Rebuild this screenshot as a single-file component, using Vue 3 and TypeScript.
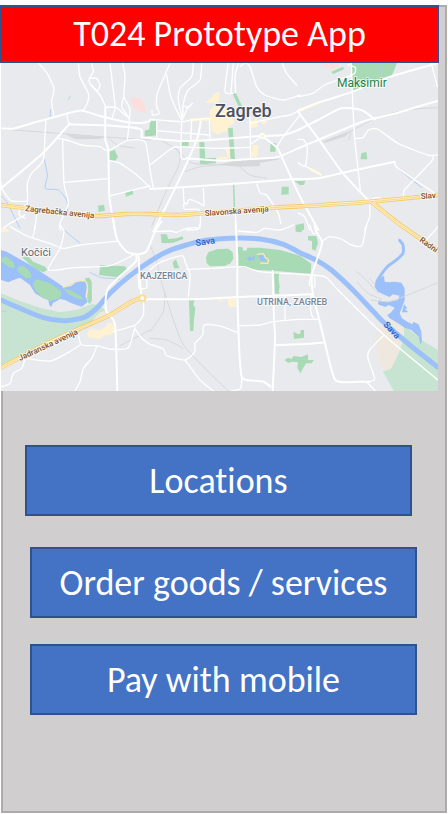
<script setup lang="ts">
type Tile = { x: number; y: number; lines: string[] }

const actions: string[] = ['Locations', 'Order goods / services', 'Pay with mobile']

// Turns "x,y x,y ..." into a softly curved path.
function curve(points: string): string {
  const p = points.split(' ').map((s) => s.split(',').map(Number))
  let d = `M${p[0][0]} ${p[0][1]}`
  for (let i = 0; i < p.length - 1; i++) {
    const a = p[Math.max(i - 1, 0)]
    const b = p[i]
    const c = p[i + 1]
    const e = p[Math.min(i + 2, p.length - 1)]
    const k = 9
    d += `C${b[0] + (c[0] - a[0]) / k} ${b[1] + (c[1] - a[1]) / k} ${c[0] - (e[0] - b[0]) / k} ${c[1] - (e[1] - b[1]) / k} ${c[0]} ${c[1]}`
  }
  return d
}

const meadow: Tile[] = [
  { x: 0, y: 495, lines: ['3,205 60,228 120,248 180,262 230,255 275,238 300,240 320,262 280,300 3,428'] },
  { x: 894, y: 495, lines: ['318,300 370,345 420,375 420,498 288,498 255,440 280,430 300,390 318,340'] },
]

const sand: Tile[] = [
  { x: 0, y: 495, lines: ['282,280 300,262 318,258 322,270 275,292'] },
  { x: 894, y: 495, lines: ['255,290 290,275 318,310 315,350 298,385 280,430 255,437 240,400 232,340'] },
]

const pink: Tile[] = [
  { x: 0, y: 0, lines: ['390,116 402,112 412,116 422,110 432,128 437,155 430,160 405,148 396,135'] },
  { x: 894, y: 0, lines: ['65,9 125,9 118,22 95,30'] },
]

const yellow: Tile[] = [
  { x: 450, y: 0, lines: [
    '165,128 185,112 198,98 209,97 207,125 195,130',
    '180,150 195,135 250,150 252,190 235,200 230,215 218,215 205,224 187,215 180,180',
    '300,185 320,175 325,200 300,205',
    '333,185 350,180 350,190 335,193',
    '308,255 326,255 322,290 305,292',
    '226,268 240,265 240,295 200,300 205,290 232,290',
    '120,175 178,172 178,182 122,184',
  ] },
  { x: 894, y: 0, lines: ['35,322 70,338 65,345 35,332', '0,148 60,124 68,130 5,156'] },
  { x: 0, y: 495, lines: [
    '262,325 270,313 300,315 320,303 322,293 340,295 345,320 330,330 315,330 300,342 265,338',
    '3,10 20,10 28,20 3,22',
  ] },
  { x: 450, y: 495, lines: ['233,222 257,220 258,247 237,246', '205,222 217,222 217,228 205,228'] },
]

const parks: Tile[] = [
  { x: 0, y: 0, lines: [
    '450,183 470,183 470,226 434,230 434,212 448,208',
    '327,275 345,269 348,280 354,290 346,302 325,300',
    '376,400 398,390 400,402 378,410',
    '294,437 312,434 315,452 296,456',
  ] },
  { x: 450, y: 0, lines: [
    '247,100 258,100 276,138 276,152 262,132',
    '234,205 248,204 255,297 242,297',
    '94,242 117,243 115,260 93,258',
    '148,246 163,246 166,295 198,293 198,310 150,313',
    '362,248 378,250 376,275 360,275',
    '395,380 416,380 416,403 394,404',
    '437,495 462,490 462,510 437,510',
    '434,364 466,362 462,374 450,376',
    '249,370 253,370 256,455 251,455',
  ] },
  { x: 894, y: 0, lines: [
    '160,9 297,9 285,38 278,52 240,62 200,85 165,90',
    '100,35 135,20 138,28 105,42',
    '190,280 205,276 208,298 188,298',
  ] },
  { x: 0, y: 495, lines: [
    '65,95 85,95 100,110 135,125 142,135 130,142 110,135 85,115',
    '300,120 375,124 383,135 350,157 298,150',
  ] },
  { x: 450, y: 495, lines: [
    '168,98 175,82 200,73 235,71 248,82 250,100 242,115 225,122 180,124 170,115',
    '262,65 277,66 280,78 290,76 292,68 330,68 390,75 450,92 484,116 482,146 450,144 380,138 320,135 270,125 262,122',
    '32,28 50,28 55,42 80,40 98,34 100,42 70,53 35,55',
    '68,112 78,103 88,130 72,130',
    '372,140 388,142 386,160 389,185 386,200 390,205 375,207',
    '117,226 133,226 130,240 136,248 132,285 130,318 120,318',
    '438,0 456,0 456,22 437,20',
    '403,405 415,398 425,402 430,393 455,396 474,388 474,405 492,405 484,415 469,415 459,430 452,445 442,430 444,412 425,410 415,414',
    '430,320 445,328 452,325 452,315 462,315 462,338 432,342',
  ] },
  { x: 894, y: 495, lines: ['30,33 55,33 60,55 52,78 42,72 42,48 30,46'] },
]

const water: Tile[] = [
  { x: 0, y: 495, lines: ['3,75 20,80 90,120 160,165 190,185 210,180 228,168 255,168 262,185 258,215 262,232 245,245 215,235 195,225 180,222 158,235 154,246 148,240 145,225 130,220 105,205 90,180 60,158 40,165 25,172 3,165'] },
  { x: 894, y: 495, lines: [
    '232,170 245,160 258,152 260,170 275,172 290,170 310,173 320,190 320,225 315,240 305,265 312,280 330,292 345,298 345,290 362,298 370,320 372,350 367,358 362,335 340,315 320,308 300,295 275,280 268,270 280,262 290,248 272,240 262,246 240,238 242,226 270,232 300,225 304,212 285,208 275,216 260,210 240,200 230,185',
    '318,238 328,250 320,252 332,262 312,262',
  ] },
]

const islets: Tile[] = [
  { x: 0, y: 495, lines: [
    '3,98 20,95 40,112 46,128 30,128 3,108',
    '55,125 70,122 90,140 95,158 80,160 65,150 52,135',
    '98,175 110,162 150,175 185,200 180,220 150,228 125,215 105,195',
    '255,160 268,158 275,170 276,225 270,237 262,230 262,210 265,190 258,175',
    '190,190 215,197 245,215 250,225 230,220 205,208',
  ] },
]

const ponds: Tile[] = [
  { x: 450, y: 495, lines: ['290,100 300,94 305,98 315,92 312,104 298,108', '325,92 343,90 348,108 332,108'] },
]

const beaches: Tile[] = [
  { x: 450, y: 495, lines: ['322,88 340,86 346,98 355,103 353,115 332,114'] },
  { x: 0, y: 495, lines: ['190,186 212,181 228,170 255,168 262,185 258,215'] },
]

const streams: Tile[] = [
  { x: 0, y: 0, lines: ['152,148 150,175', '132,295 142,345 136,385 175,390 200,420 203,455', '0,405 20,425 40,465 60,505', '212,108 205,118'] },
  { x: 894, y: 0, lines: ['305,330 370,382', '248,18 248,34', '246,42 243,52'] },
  { x: 0, y: 495, lines: ['192,15 240,55', '270,142 305,158 360,162', '3,258 18,259'] },
]

const rails: Tile[] = [
  { x: 0, y: 0, lines: ['3,207 200,222 300,230 450,240', '200,222 228,236 300,234', '325,232 350,255 402,264'] },
  { x: 450, y: 0, lines: ['0,239 30,240 80,268 100,290 130,310 200,315 250,310 350,302 444,262', '75,262 90,285 85,320 45,400 5,500', '265,316 300,345 350,355', '105,335 150,320 200,315'] },
  { x: 894, y: 0, lines: ['75,246 160,212 230,176 300,155 360,146 420,143', '160,212 152,240'] },
  { x: 0, y: 495, lines: ['360,362 450,315'] },
  { x: 450, y: 495, lines: ['0,60 20,110 40,190 95,350 165,430 235,498', '45,200 40,260 0,320', '0,340 50,345 100,370'] },
  { x: 894, y: 495, lines: ['220,225 270,230 330,210 420,173', '178,172 210,205 250,222', '175,140 200,160 240,205', '215,160 232,180'] },
]

const yards: Tile[] = [
  { x: 450, y: 0, lines: ['200,315 250,303 370,290 390,298 330,308 330,318 270,320'] },
  { x: 0, y: 0, lines: ['200,222 320,230 300,236 228,236'] },
  { x: 894, y: 0, lines: ['75,244 160,212 140,230 80,248'] },
]

const minor: Tile[] = [
  { x: 0, y: 0, lines: [
    '115,9 140,38 162,85 155,125 162,168',
    '235,9 240,50 265,100 262,130 248,152',
    '275,9 280,35 268,55 272,75 300,105 318,142',
    '272,55 290,55 300,75 292,92 275,75',
    '330,9 336,60 345,140 335,178',
    '368,9 375,50 372,110 390,150 382,242',
    '370,112 365,140 378,160 386,175',
    '315,142 348,142 375,165 388,172',
    '200,165 207,193',
    '138,178 135,220 130,300 95,340 82,370 82,430 60,445 58,465 75,475',
    '188,240 192,370 205,430 180,490 182,510',
    '192,367 325,356',
    '328,408 380,395 450,378',
    '325,302 360,310 410,345 450,382',
    '175,235 200,240 245,255 300,260 325,272 382,242 435,245 450,330 460,385',
    '3,365 5,385 30,420 45,424 82,424',
    '112,445 105,505',
    '75,465 30,490 10,505',
  ] },
  { x: 450, y: 0, lines: [
    '0,178 60,183 100,185 125,180 178,175',
    '20,212 180,225', '20,180 20,235', '95,185 93,290 108,297', '125,180 122,240', '178,175 180,240',
    '93,260 130,262 200,265 300,262',
    '0,315 70,262 93,265',
    '300,170 302,297',
    '337,228 303,252',
    '380,262 400,230 450,165',
    '300,190 380,172 420,165 450,150',
    '130,9 125,50 90,85 85,120 98,180',
    '155,9 150,60 115,90 100,130 98,175',
    '100,172 112,146 128,130 112,142 104,138',
    '60,9 45,45 22,100 20,140 28,160 8,165 6,152',
    '50,45 60,100 75,140 95,180',
    '235,9 225,95 250,100', '250,9 243,98', '265,9 255,50 257,98',
    '270,20 285,9 300,20 320,80 345,105 400,120 450,105',
    '397,9 410,40 440,75',
    '100,385 102,425 112,432 118,418 150,430 160,438',
    '160,385 162,435',
    '102,430 104,448 148,450 148,505 110,510',
    '256,455 258,510',
    '320,372 332,400 350,405 385,460 392,490',
  ] },
  { x: 894, y: 0, lines: [
    '0,110 45,100 80,75 150,50 170,40 172,22 150,14',
    '160,9 163,100 170,235 187,390',
    '170,235 195,233 212,210 240,208 300,250 390,285 420,285',
    '405,290 400,305 320,390 320,422',
    '290,305 300,325 408,398',
    '0,238 18,240 28,265 22,318 0,308', '22,318 70,345',
    '400,9 418,80',
    '215,430 215,470 200,510',
    '190,425 240,412 250,420',
    '0,460 20,470 35,510',
  ] },
  { x: 0, y: 495, lines: [
    '30,5 95,38 105,0',
    '95,38 150,55 190,70 240,60 355,48',
    '180,0 192,20 180,70 145,135 220,128 330,122 400,90',
    '415,150 418,190 440,188 440,165',
    '430,230 430,270 405,300 340,320',
    '235,330 245,360 290,362 330,372 385,368 405,305',
    '75,400 150,408 200,385 240,360',
    '75,402 65,430 40,445 30,475 3,485',
    '290,365 275,400 250,430 240,470 225,498',
    '405,312 425,340 450,358',
  ] },
  { x: 450, y: 495, lines: [
    '15,20 60,18 80,22 110,10 148,8 148,0',
    '0,135 30,112 95,92 105,110 120,150 115,215',
    '110,133 190,130 280,125 330,140 450,148',
    '265,18 320,22 345,10 390,15 430,0',
    '265,302 330,300 370,290 450,283',
    '405,215 405,285',
    '0,358 40,372 50,392 105,405 135,380 135,355 158,330 162,300 205,302 265,323',
    '105,405 150,465 190,498',
    '275,455 272,490 245,498',
  ] },
  { x: 894, y: 495, lines: [
    '75,47 95,35 130,42 160,60 192,62 205,0',
    '0,148 80,155 120,195 258,330 420,465',
    '215,470 230,460 210,400 215,375 258,330',
    '35,0 45,25 58,25', '0,283 65,283', '38,155 34,180 50,185 50,155', '40,210 38,260 48,283',
    '205,470 232,498', '420,5 385,45',
  ] },
]

const major: Tile[] = [
  { x: 0, y: 0, lines: [
    '3,205 40,206 100,188 162,172 210,158 248,152 300,168 386,187 430,188 450,183',
    '207,193 315,196 420,207 425,232 450,233',
    '3,385 130,278 207,193',
    '316,142 316,240 325,272 328,410 345,510',
  ] },
  { x: 450, y: 0, lines: [
    '0,235 90,243 180,240 300,230 400,225 450,208',
    '152,185 140,240 75,385 10,515',
    '108,295 220,302 300,297 380,292 450,262',
    '0,387 75,383 240,372 370,362 450,356',
    '337,228 380,262 395,290 450,410 505,510',
  ] },
  { x: 894, y: 0, lines: [
    '0,152 70,125 165,95 270,52 420,9',
    '0,210 60,180 130,145 190,150 230,178',
    '0,265 65,238 200,183 300,158 420,122',
    '0,155 60,235 135,340 215,425',
    '0,358 60,355 135,338 290,305',
  ] },
  { x: 0, y: 495, lines: [
    '340,-15 345,20 355,50 380,80 410,88 440,78 465,20 484,-10',
    '408,88 405,112 325,190 318,255 345,300 352,498',
    '415,88 425,215 450,222',
  ] },
  { x: 450, y: 495, lines: [
    '257,-10 262,100 262,215 268,380 275,455 290,465 340,470 362,485',
    '0,223 150,222 262,216 490,208',
    '368,138 372,280 375,340 368,498',
    '378,360 450,358 525,352',
  ] },
  { x: 894, y: 495, lines: ['50,0 55,20 72,50 65,80 42,150 45,210 60,270 80,350 112,465 180,470 215,470'] },
]

const highways: string[] = [
  '3,435 60,442 170,458 290,468 380,462 450,462 530,465 610,460 820,443 954,436 1114,425 1314,405',
  '1114,425 1202,495 1314,572',
  '3,923 130,856 240,805 320,770 395,725 425,713',
]

const river = '3,720 60,745 130,773 190,782 250,773 290,745 330,700 380,655 450,604 510,571 600,544 690,535 780,537 850,553 900,578 950,601 994,630 1064,695 1144,780 1194,825 1244,867 1314,922'
const inlet = '1199,541 1209,555 1209,580 1189,600 1164,618 1146,640 1132,662'
</script>

<template>
  <div class="page">
    <main class="frame">
      <header class="banner"><h1>T024 Prototype App</h1></header>

      <svg class="map" viewBox="0 0 437 328" role="img" aria-label="Zagreb">
        <g transform="translate(-1 -3) scale(0.33333)">
          <g class="meadow"><g v-for="t in meadow" :key="t.x" :transform="`translate(${t.x} ${t.y})`"><polygon v-for="l in t.lines" :key="l" :points="l" /></g></g>
          <g class="sand"><g v-for="t in sand" :key="t.x" :transform="`translate(${t.x} ${t.y})`"><polygon v-for="l in t.lines" :key="l" :points="l" /></g></g>
          <g class="pink"><g v-for="t in pink" :key="t.x" :transform="`translate(${t.x} ${t.y})`"><polygon v-for="l in t.lines" :key="l" :points="l" /></g></g>
          <g class="yellow"><g v-for="(t, i) in yellow" :key="i" :transform="`translate(${t.x} ${t.y})`"><polygon v-for="l in t.lines" :key="l" :points="l" /></g></g>
          <g class="park"><g v-for="(t, i) in parks" :key="i" :transform="`translate(${t.x} ${t.y})`"><polygon v-for="l in t.lines" :key="l" :points="l" /></g></g>
          <g class="water"><g v-for="t in water" :key="t.x" :transform="`translate(${t.x} ${t.y})`"><polygon v-for="l in t.lines" :key="l" :points="l" /></g></g>
          <g class="park"><g v-for="t in islets" :key="t.x" :transform="`translate(${t.x} ${t.y})`"><polygon v-for="l in t.lines" :key="l" :points="l" /></g></g>
          <g class="water"><g v-for="t in ponds" :key="t.x" :transform="`translate(${t.x} ${t.y})`"><polygon v-for="l in t.lines" :key="l" :points="l" /></g></g>
          <g class="line beach"><g v-for="t in beaches" :key="t.x" :transform="`translate(${t.x} ${t.y})`"><path v-for="l in t.lines" :key="l" :d="curve(l)" /></g></g>
          <g class="yard"><g v-for="t in yards" :key="t.x" :transform="`translate(${t.x} ${t.y})`"><polygon v-for="l in t.lines" :key="l" :points="l" /></g></g>
          <g class="line stream"><g v-for="(t, i) in streams" :key="i" :transform="`translate(${t.x} ${t.y})`"><path v-for="l in t.lines" :key="l" :d="curve(l)" /></g></g>
          <g class="line rail"><g v-for="(t, i) in rails" :key="i" :transform="`translate(${t.x} ${t.y})`"><path v-for="l in t.lines" :key="l" :d="curve(l)" /></g></g>
          <path class="line inlet" :d="curve(inlet)" />
          <path class="line river" :d="curve(river)" />
          <g class="line minor"><g v-for="(t, i) in minor" :key="i" :transform="`translate(${t.x} ${t.y})`"><path v-for="l in t.lines" :key="l" :d="curve(l)" /></g></g>
          <g class="line major"><g v-for="(t, i) in major" :key="i" :transform="`translate(${t.x} ${t.y})`"><path v-for="l in t.lines" :key="l" :d="curve(l)" /></g></g>
          <circle class="ring" cx="787" cy="228" r="7" />
          <g class="line casing"><path v-for="h in highways" :key="h" :d="curve(h)" /></g>
          <g class="line lane"><path v-for="h in highways" :key="h" :d="curve(h)" /></g>
          <g class="line divider"><path v-for="h in highways" :key="h" :d="curve(h)" /></g>
          <circle class="roundabout" cx="427" cy="715" r="9" />
        </g>

        <text class="city" x="214" y="54">Zagreb</text>
        <text class="park-name" x="336" y="24">Maksimir</text>
        <text class="town" x="20" y="193">Kočići</text>
        <text class="district" x="139" y="216">KAJZERICA</text>
        <text class="district" x="256" y="242">UTRINA, ZAGREB</text>
        <text class="road" transform="translate(24 148) rotate(6)">Zagrebačka avenija</text>
        <text class="road" transform="translate(204 153) rotate(-4)">Slavonska avenija</text>
        <text class="road" transform="translate(420 136) rotate(-4)">Slav</text>
        <text class="road" transform="translate(418 178) rotate(36)">Radni</text>
        <text class="road" transform="translate(19 298) rotate(-25)">Jadranska avenija</text>
        <text class="river-name" transform="translate(195 183) rotate(-8)">Sava</text>
        <text class="river-name" transform="translate(382 262) rotate(47)">Sava</text>
      </svg>

      <nav class="actions">
        <button v-for="label in actions" :key="label" type="button" class="action">{{ label }}</button>
      </nav>
    </main>
  </div>
</template>

<style>
body {
  background: #fff;
}
</style>

<style scoped>
.page {
  box-sizing: border-box;
  min-height: 100vh;
  padding: 5px 1px 1px;
  display: flex;
  font-family: Carlito, Lato, sans-serif;
  font-variant-ligatures: none;
}
.frame {
  box-sizing: border-box;
  flex: 1;
  min-width: 0;
  display: flex;
  flex-direction: column;
  background: #d0cece;
  border: 2px solid #aeabab;
}
.banner {
  box-sizing: border-box;
  margin: -2px 6px 0 -3px;
  height: 58px;
  display: flex;
  align-items: center;
  justify-content: center;
  background: #f00;
  border: 2px solid #2f528f;
  color: #fff;
}
h1 {
  margin: 0;
  font-size: 36px;
  line-height: 40px;
  font-weight: 400;
}
.map {
  display: block;
  margin: 0 7px 0 -2px;
  background: #e8eaed;
}
.actions {
  display: flex;
  flex-direction: column;
  gap: 26px;
  padding: 54px 28px 54px 27px;
}
.action {
  box-sizing: border-box;
  height: 71px;
  padding: 0;
  border: 2px solid #2f528f;
  border-radius: 0;
  background: #4472c4;
  color: #fff;
  font-family: inherit;
  font-variant-ligatures: inherit;
  font-size: 36px;
  line-height: 40px;
  cursor: pointer;
}
.action:first-child {
  margin: 0 5px 5px -5px;
}

.meadow { fill: #c6e4d1; }
.sand { fill: #eee8df; }
.pink { fill: #fbdfdf; }
.yellow { fill: #fef2d2; }
.park { fill: #a8dab5; }
.water { fill: #9cc0f9; }
.yard { fill: #d6d8db; }
.line {
  fill: none;
  stroke-linecap: round;
  stroke-linejoin: round;
}
.beach { stroke: #fbe9bd; stroke-width: 4; }
.stream { stroke: #b3cdf6; stroke-width: 3; }
.rail { stroke: #d5d7da; stroke-width: 3; }
.inlet { stroke: #9cc0f9; stroke-width: 9; }
.river { stroke: #9cc0f9; stroke-width: 15; }
.minor { stroke: #fff; stroke-width: 4; }
.major { stroke: #fff; stroke-width: 6; }
.ring { fill: #fef2d2; stroke: #fff; stroke-width: 4; }
.casing { stroke: #f7c966; stroke-width: 13; }
.lane { stroke: #fef0c8; stroke-width: 8; }
.divider { stroke: #f7c966; stroke-width: 2; }
.roundabout { fill: #fff; stroke: #fbdd95; stroke-width: 6; }

text {
  font-family: Roboto, sans-serif;
  stroke: #fff;
  stroke-width: 2px;
  stroke-opacity: 0.7;
  stroke-linejoin: round;
  paint-order: stroke;
}
.city { font-size: 18px; font-weight: 500; fill: #4a5160; }
.park-name { font-size: 12px; font-weight: 400; fill: #1f8241; }
.town { font-size: 11px; fill: #5f6673; }
.district { font-size: 9px; font-weight: 500; fill: #76849a; }
.road { font-size: 8px; font-weight: 500; fill: #7d4f2b; }
.river-name { font-size: 9px; font-weight: 500; fill: #2a62c8; stroke: none; }
</style>
